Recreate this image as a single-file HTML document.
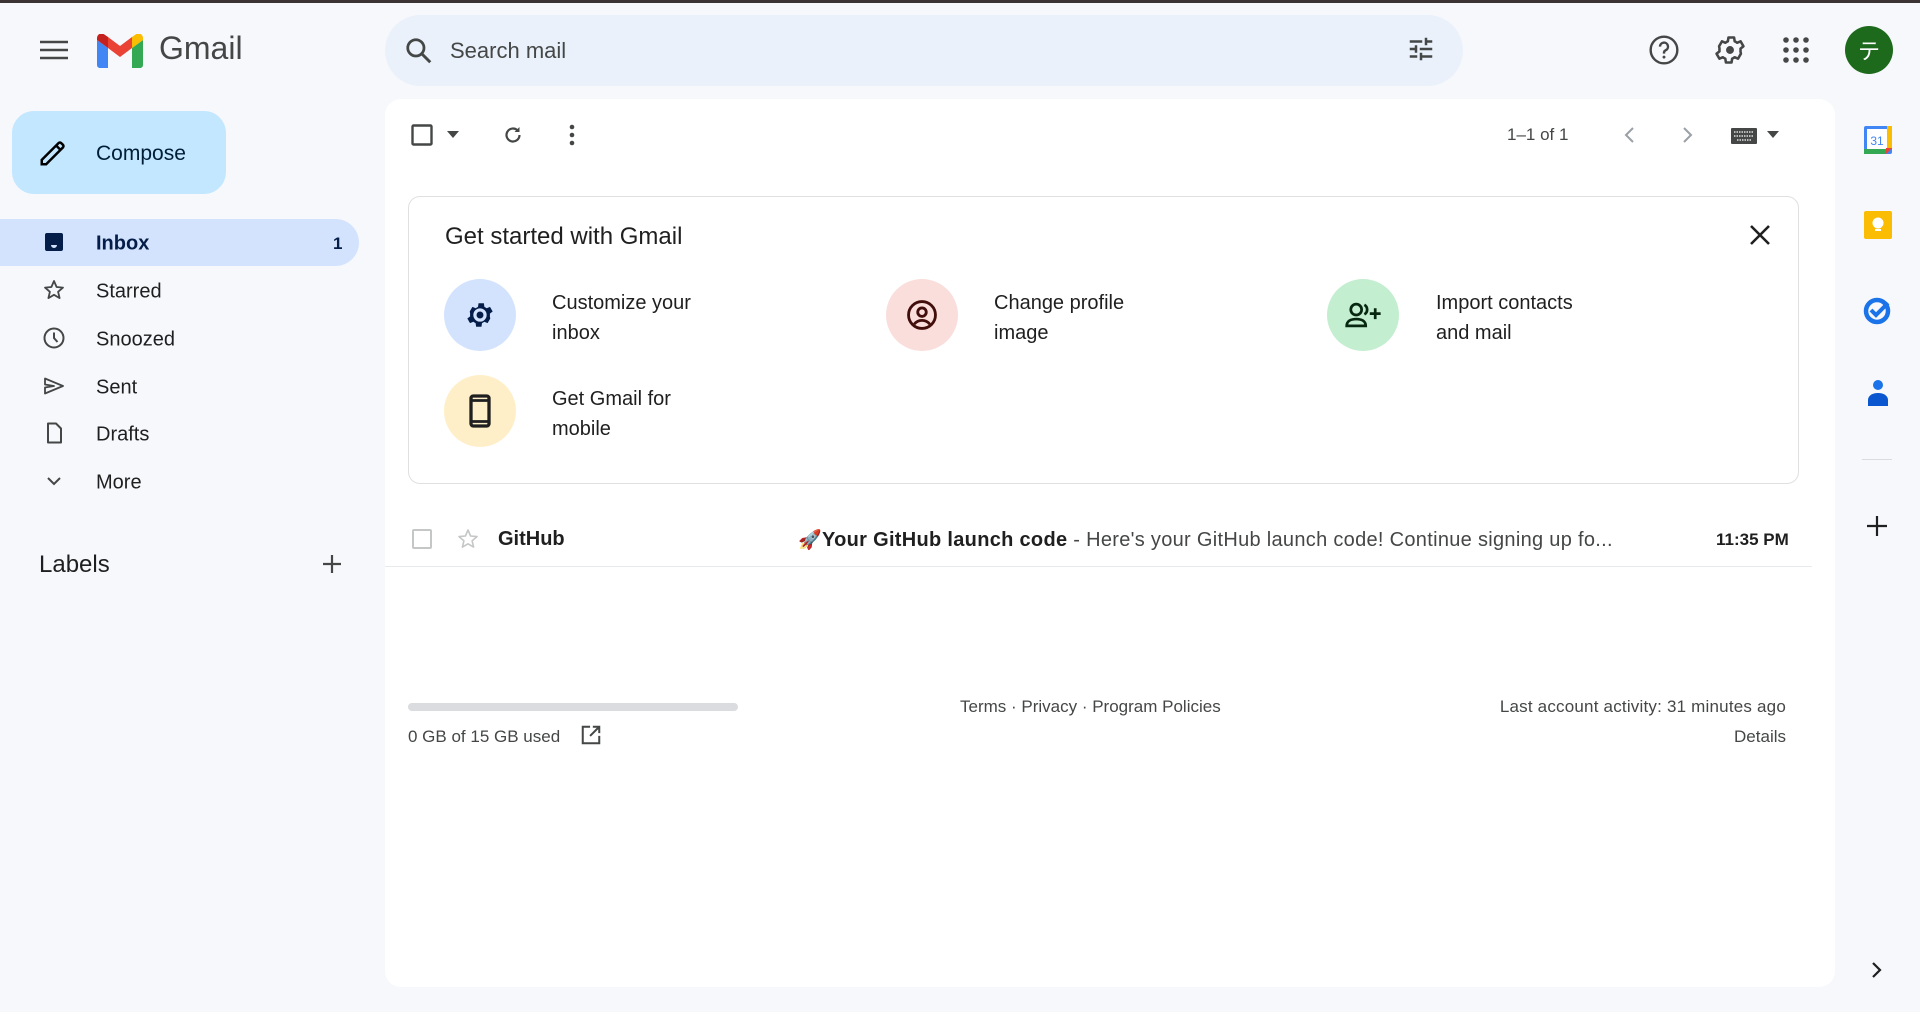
<!DOCTYPE html>
<html><head><meta charset="utf-8"><style>
*{margin:0;padding:0;box-sizing:border-box}
body{width:1920px;height:1012px;background:#f6f8fc;font-family:"Liberation Sans","Noto Sans CJK JP",sans-serif;color:#1f1f1f;position:relative;overflow:hidden}
.a{position:absolute}
.topbar{left:0;top:0;width:1920px;height:3px;background:#3c3434}
.nav{left:96px;font-size:20px;color:#1f1f1f;transform:translateY(-50%);margin-top:2px}
.ni{left:42px;transform:translateY(-50%)}
.circ{width:72px;height:72px;border-radius:50%;display:flex;align-items:center;justify-content:center}
.ct{font-size:20px;line-height:30px;color:#1f1f1f}
.g{color:#444746}
</style></head><body>
<div class="a topbar"></div>
<svg class="a" style="left:40px;top:38px" width="28" height="24" viewBox="0 0 28 24"><path d="M0 4h28M0 12h28M0 20h28" stroke="#444746" stroke-width="2.6"/></svg>
<svg class="a" style="left:97px;top:34px" width="46" height="34" viewBox="0 0 46 34">
<path d="M3 34h8V14L0 6v25c0 1.7 1.3 3 3 3z" fill="#4285f4"/>
<path d="M35 34h8c1.7 0 3-1.3 3-3V6l-11 8z" fill="#34a853"/>
<path d="M35 3v11l11-8V4c0-3.7-4.2-5.8-7.2-3.6z" fill="#fbbc04"/>
<path d="M11 14V3l12 9 12-9v11l-12 9z" fill="#ea4335"/>
<path d="M0 4v2l11 8V3L7.2.4C4.2-1.8 0 .3 0 4z" fill="#c5221f"/>
</svg>
<div class="a" style="left:159px;top:30px;font-size:32px;color:#444746">Gmail</div>
<div class="a" style="left:385px;top:15px;width:1078px;height:71px;border-radius:36px;background:#eaf1fb"></div>
<svg class="a" style="left:404px;top:36px" width="30" height="30" viewBox="0 0 24 24"><circle cx="9.5" cy="9.5" r="6.5" fill="none" stroke="#444746" stroke-width="2.2"/><path d="M14.5 14.5l6.5 6.5" stroke="#444746" stroke-width="2.4"/></svg>
<div class="a g" style="left:450px;top:38px;font-size:22px">Search mail</div>
<svg class="a" style="left:1406px;top:34px" width="30" height="30" viewBox="0 0 24 24" fill="#444746"><path d="M3 17v2h6v-2H3zM3 5v2h10V5H3zm10 16v-2h8v-2h-8v-2h-2v6h2zM7 9v2H3v2h4v2h2V9H7zm14 4v-2H11v2h10zm-6-4h2V7h4V5h-4V3h-2v6z"/></svg>
<svg class="a" style="left:1648px;top:34px" width="32" height="32" viewBox="0 0 24 24"><circle cx="12" cy="12" r="10" fill="none" stroke="#444746" stroke-width="1.8"/><path d="M9 9.5a3 3 0 1 1 4.2 2.7c-.8.4-1.2 1-1.2 1.8v.7" fill="none" stroke="#444746" stroke-width="1.8"/><circle cx="12" cy="17.3" r="1.1" fill="#444746"/></svg>
<svg class="a" style="left:1713px;top:33px" width="34" height="34" viewBox="0 0 24 24"><path fill="none" stroke="#444746" stroke-width="1.8" stroke-linejoin="round" d="M19.4 13a7.8 7.8 0 0 0 0-2l2.1-1.6-2-3.5-2.5 1a7 7 0 0 0-1.7-1l-.4-2.7h-4l-.4 2.7a7 7 0 0 0-1.7 1l-2.5-1-2 3.5L4.6 11a7.8 7.8 0 0 0 0 2l-2.1 1.6 2 3.5 2.5-1a7 7 0 0 0 1.7 1l.4 2.7h4l.4-2.7a7 7 0 0 0 1.7-1l2.5 1 2-3.5z"/><circle cx="12" cy="12" r="2.8" fill="#444746"/></svg>
<svg class="a" style="left:1783px;top:37px" width="26" height="26" viewBox="0 0 26 26" fill="#444746"><circle cx="3" cy="3" r="2.8"/><circle cx="13" cy="3" r="2.8"/><circle cx="23" cy="3" r="2.8"/><circle cx="3" cy="13" r="2.8"/><circle cx="13" cy="13" r="2.8"/><circle cx="23" cy="13" r="2.8"/><circle cx="3" cy="23" r="2.8"/><circle cx="13" cy="23" r="2.8"/><circle cx="23" cy="23" r="2.8"/></svg>
<div class="a" style="left:1845px;top:26px;width:48px;height:48px;border-radius:50%;background:#1e6a1c;color:#fff;font-size:22px;display:flex;align-items:center;justify-content:center">テ</div>
<div class="a" style="left:12px;top:111px;width:214px;height:83px;border-radius:22px;background:#c2e7ff"></div>
<svg class="a" style="left:38px;top:138px" width="30" height="30" viewBox="0 0 24 24"><path d="M3 21v-3.5L16.5 4a1.5 1.5 0 0 1 2 0l1.5 1.5a1.5 1.5 0 0 1 0 2L6.5 21H3z" fill="none" stroke="#000" stroke-width="2"/><path d="M14.5 6l3.5 3.5" stroke="#000" stroke-width="2"/></svg>
<div class="a" style="left:96px;top:142px;font-size:21px;color:#001d35">Compose</div>
<div class="a" style="left:0;top:219px;width:359px;height:47px;border-radius:0 24px 24px 0;background:#d3e3fd"></div>
<svg class="a ni" style="top:242px" width="24" height="24" viewBox="0 0 24 24"><path fill="#041e49" d="M19 3H5a2 2 0 0 0-2 2v14a2 2 0 0 0 2 2h14a2 2 0 0 0 2-2V5a2 2 0 0 0-2-2zm0 12h-4a3 3 0 0 1-6 0H5V5h14z"/><rect x="5" y="5" width="14" height="10" fill="#041e49"/></svg>
<div class="a nav" style="top:242px;font-weight:bold;color:#041e49">Inbox</div>
<div class="a" style="left:333px;top:244px;transform:translateY(-50%);font-size:17px;font-weight:bold;color:#041e49">1</div>
<svg class="a ni" style="top:290px" width="24" height="24" viewBox="0 0 24 24"><path d="M12 3l2.6 6 6.4.6-4.9 4.2 1.5 6.3L12 16.8 6.4 20.1l1.5-6.3L3 9.6l6.4-.6z" fill="none" stroke="#444746" stroke-width="1.8" stroke-linejoin="round"/></svg>
<div class="a nav" style="top:290px">Starred</div>
<svg class="a ni" style="top:338px" width="24" height="24" viewBox="0 0 24 24"><circle cx="12" cy="12" r="9.5" fill="none" stroke="#444746" stroke-width="2"/><path d="M12 6.5V12l3.5 4" fill="none" stroke="#444746" stroke-width="2"/></svg>
<div class="a nav" style="top:338px">Snoozed</div>
<svg class="a ni" style="top:386px" width="24" height="24" viewBox="0 0 24 24"><path d="M3 4.5l18 7.5-18 7.5V13.5l9-1.5-9-1.5z" fill="none" stroke="#444746" stroke-width="1.8" stroke-linejoin="round"/></svg>
<div class="a nav" style="top:386px">Sent</div>
<svg class="a ni" style="top:433px" width="24" height="24" viewBox="0 0 24 24"><path d="M6 2.5h8l5 5v14H6z" fill="none" stroke="#444746" stroke-width="2" stroke-linejoin="round"/></svg>
<div class="a nav" style="top:433px">Drafts</div>
<svg class="a ni" style="top:481px" width="24" height="24" viewBox="0 0 24 24"><path d="M6 9l6 6 6-6" fill="none" stroke="#444746" stroke-width="2"/></svg>
<div class="a nav" style="top:481px">More</div>
<div class="a" style="left:39px;top:551px;font-size:24px;color:#1f1f1f">Labels</div>
<svg class="a" style="left:321px;top:553px" width="22" height="22" viewBox="0 0 22 22"><path d="M11 2v18M2 11h18" stroke="#444746" stroke-width="2.2"/></svg>
<div class="a" style="left:385px;top:99px;width:1450px;height:888px;border-radius:16px;background:#fff"></div>
<svg class="a" style="left:411px;top:124px" width="22" height="22"><rect x="1.5" y="1.5" width="19" height="19" fill="none" stroke="#444746" stroke-width="2.4" rx="1"/></svg>
<svg class="a" style="left:447px;top:131px" width="12" height="7"><path d="M0 0h12L6 7z" fill="#444746"/></svg>
<svg class="a" style="left:501px;top:123px" width="24" height="24" viewBox="0 0 24 24"><path d="M18.5 12a6.5 6.5 0 1 1-2-4.7" fill="none" stroke="#444746" stroke-width="2.2"/><path d="M18.5 4v5h-5z" fill="#444746"/></svg>
<svg class="a" style="left:568px;top:124px" width="8" height="22"><circle cx="4" cy="3" r="2.3" fill="#444746"/><circle cx="4" cy="11" r="2.3" fill="#444746"/><circle cx="4" cy="19" r="2.3" fill="#444746"/></svg>
<div class="a g" style="left:1507px;top:125px;font-size:17px">1–1 of 1</div>
<svg class="a" style="left:1622px;top:125px" width="14" height="20"><path d="M11 3L4 10l7 7" fill="none" stroke="#9aa0a6" stroke-width="2"/></svg>
<svg class="a" style="left:1681px;top:125px" width="14" height="20"><path d="M3 3l7 7-7 7" fill="none" stroke="#9aa0a6" stroke-width="2"/></svg>
<svg class="a" style="left:1731px;top:128px" width="26" height="16"><rect width="26" height="16" rx="1" fill="#444746"/><path d="M3 4h20M3 8h20M6 12h14" stroke="#fff" stroke-width="1.2" stroke-dasharray="1.5 1"/></svg>
<svg class="a" style="left:1767px;top:131px" width="12" height="7"><path d="M0 0h12L6 7z" fill="#444746"/></svg>
<div class="a" style="left:408px;top:196px;width:1391px;height:288px;border:1px solid #e0e0e0;border-radius:12px"></div>
<div class="a" style="left:445px;top:223px;font-size:24px;color:#1f1f1f">Get started with Gmail</div>
<svg class="a" style="left:1748px;top:223px" width="24" height="24"><path d="M3 3l18 18M21 3L3 21" stroke="#1f1f1f" stroke-width="2.6"/></svg>
<div class="a circ" style="left:444px;top:279px;background:#d3e3fd"><svg width="32" height="32" viewBox="0 0 24 24"><path fill="#041e49" d="M19.4 13a7.8 7.8 0 0 0 0-2l2.1-1.6-2-3.5-2.5 1a7 7 0 0 0-1.7-1l-.4-2.7h-4l-.4 2.7a7 7 0 0 0-1.7 1l-2.5-1-2 3.5L4.6 11a7.8 7.8 0 0 0 0 2l-2.1 1.6 2 3.5 2.5-1a7 7 0 0 0 1.7 1l.4 2.7h4l.4-2.7a7 7 0 0 0 1.7-1l2.5 1 2-3.5zM12 17a5 5 0 1 1 0-10 5 5 0 0 1 0 10z"/><circle cx="12" cy="12" r="2.6" fill="#041e49"/></svg></div>
<div class="a ct" style="left:552px;top:288px">Customize your<br>inbox</div>
<div class="a circ" style="left:886px;top:279px;background:#f9dedc"><svg width="34" height="34" viewBox="0 0 24 24"><circle cx="12" cy="12" r="9.5" fill="none" stroke="#410e0b" stroke-width="2"/><circle cx="12" cy="10" r="3" fill="none" stroke="#410e0b" stroke-width="2"/><path d="M6.5 18.5c1.5-2 3.5-2.7 5.5-2.7s4 .7 5.5 2.7" fill="none" stroke="#410e0b" stroke-width="2"/></svg></div>
<div class="a ct" style="left:994px;top:288px">Change profile<br>image</div>
<div class="a circ" style="left:1327px;top:279px;background:#c4eed0"><svg width="38" height="34" viewBox="0 0 28 24"><circle cx="9" cy="8" r="4" fill="none" stroke="#072711" stroke-width="2"/><path d="M2 20c0-3.5 3-5 7-5s7 1.5 7 5z" fill="none" stroke="#072711" stroke-width="2"/><path d="M15 4.5a4 4 0 0 1 0 7M23 7v8M19 11h8" fill="none" stroke="#072711" stroke-width="2"/></svg></div>
<div class="a ct" style="left:1436px;top:288px">Import contacts<br>and mail</div>
<div class="a circ" style="left:444px;top:375px;background:#ffefc9"><svg width="28" height="36" viewBox="0 0 16 24"><rect x="2" y="2" width="12" height="20" rx="1.5" fill="none" stroke="#1f1f1f" stroke-width="2.2"/><path d="M2 5h12M2 19h12" stroke="#1f1f1f" stroke-width="1.8"/></svg></div>
<div class="a ct" style="left:552px;top:384px">Get Gmail for<br>mobile</div>
<div class="a" style="left:385px;top:566px;width:1427px;height:1px;background:#e8eaed"></div>
<svg class="a" style="left:412px;top:529px" width="20" height="20"><rect x="1" y="1" width="18" height="18" fill="none" stroke="#c4c7c5" stroke-width="2" rx="1"/></svg>
<svg class="a" style="left:456px;top:527px" width="24" height="24" viewBox="0 0 24 24"><path d="M12 3l2.6 6 6.4.6-4.9 4.2 1.5 6.3L12 16.8 6.4 20.1l1.5-6.3L3 9.6l6.4-.6z" fill="none" stroke="#c4c7c5" stroke-width="1.6" stroke-linejoin="round"/></svg>
<div class="a" style="left:498px;top:528px;font-size:20px;font-weight:bold;color:#1f1f1f">GitHub</div>
<div class="a" style="left:798px;top:528px;font-size:20px;white-space:nowrap;letter-spacing:0.3px"><span style="font-size:19px">🚀</span><b style="color:#1f1f1f">Your GitHub launch code</b><span class="g"> - Here's your GitHub launch code! Continue signing up fo...</span></div>
<div class="a" style="left:1716px;top:530px;font-size:17px;font-weight:bold;color:#1f1f1f">11:35 PM</div>
<div class="a" style="left:408px;top:703px;width:330px;height:8px;border-radius:4px;background:#dadce0"></div>
<div class="a g" style="left:408px;top:727px;font-size:17px">0 GB of 15 GB used</div>
<svg class="a" style="left:580px;top:724px" width="22" height="22" viewBox="0 0 24 24"><path d="M11 3H3v18h18v-8" fill="none" stroke="#444746" stroke-width="2.2"/><path d="M14 3h7v7M21 3l-10 10" fill="none" stroke="#444746" stroke-width="2.2"/></svg>
<div class="a g" style="left:960px;top:697px;font-size:17px">Terms · Privacy · Program Policies</div>
<div class="a g" style="left:1400px;width:386px;top:697px;font-size:17px;text-align:right;letter-spacing:0.2px">Last account activity: 31 minutes ago</div>
<div class="a g" style="left:1600px;width:186px;top:727px;font-size:17px;text-align:right">Details</div>
<svg class="a" style="left:1864px;top:126px" width="28" height="28" viewBox="0 0 28 28"><rect x="0" y="0" width="28" height="28" rx="2" fill="#4285f4"/><rect x="3" y="3" width="22" height="20" fill="#fff"/><rect x="0" y="23" width="22" height="5" fill="#34a853"/><rect x="23" y="0" width="5" height="22" fill="#fbbc04"/><path d="M22 28l6-6h-6z" fill="#ea4335"/><text x="13" y="19" font-size="12" text-anchor="middle" fill="#4285f4" font-family="Liberation Sans">31</text></svg>
<svg class="a" style="left:1864px;top:211px" width="28" height="28" viewBox="0 0 28 28"><rect width="28" height="28" rx="2" fill="#fbbc04"/><circle cx="14" cy="12" r="5.5" fill="#fff"/><rect x="11" y="18" width="6" height="2" fill="#fff"/></svg>
<svg class="a" style="left:1863px;top:295px" width="30" height="30" viewBox="0 0 30 30"><circle cx="14" cy="16" r="11" fill="none" stroke="#1a73e8" stroke-width="4.5"/><path d="M8 15l5 5 12-12" fill="none" stroke="#1a73e8" stroke-width="4"/></svg>
<svg class="a" style="left:1865px;top:378px" width="26" height="30" viewBox="0 0 26 30"><circle cx="13" cy="7" r="5" fill="#1a73e8"/><path d="M3 28v-6c0-4 4-7 10-7s10 3 10 7v6z" fill="#0b57d0"/></svg>
<div class="a" style="left:1862px;top:459px;width:30px;height:1px;background:#dadce0"></div>
<svg class="a" style="left:1866px;top:515px" width="22" height="22"><path d="M11 1v20M1 11h20" stroke="#1f1f1f" stroke-width="2.2"/></svg>
<svg class="a" style="left:1871px;top:961px" width="12" height="18"><path d="M2 2l7 7-7 7" fill="none" stroke="#1f1f1f" stroke-width="2.2"/></svg>
</body></html>
